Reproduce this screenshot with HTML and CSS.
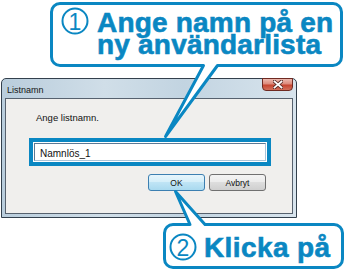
FILE: index.html
```html
<!DOCTYPE html>
<html lang="sv">
<head>
<meta charset="utf-8">
<title>Listnamn</title>
<link rel="stylesheet" href="styles.css">
</head>
<body>
<div class="page">
  <div class="callout callout-top">
    <svg class="num" width="28" height="28" viewBox="0 0 28 28"><circle cx="14" cy="14" r="12.5"/><text x="14" y="22.5">1</text></svg>
    <div class="callout-lines">
      <div class="callout-text">Ange namn på en</div>
      <div class="callout-text">ny användarlista</div>
    </div>
  </div>

  <div class="dialog">
    <div class="titlebar">
      <span class="title">Listnamn</span>
      <div class="close">
        <svg width="10" height="9" viewBox="0 0 10 9"><path class="x-out" d="M1.5 1.5 L8.5 7.5 M8.5 1.5 L1.5 7.5"/><path class="x-in" d="M1.5 1.5 L8.5 7.5 M8.5 1.5 L1.5 7.5"/></svg>
      </div>
    </div>
    <div class="content">
      <div class="prompt">Ange listnamn.</div>
      <div class="highlight"><div class="field">Namnlös_1</div></div>
      <div class="buttons">
        <div class="btn btn-ok">OK</div>
        <div class="btn">Avbryt</div>
      </div>
    </div>
  </div>

  <div class="callout callout-bottom">
    <svg class="num" width="28" height="28" viewBox="0 0 28 28"><circle cx="14" cy="14" r="12.5"/><text x="14" y="22.5">2</text></svg>
    <div class="callout-lines">
      <div class="callout-text">Klicka på</div>
    </div>
  </div>

  <svg class="tails" width="344" height="269" viewBox="0 0 344 269">
    <polygon class="tail-fill" points="165.5,136.5 203.5,65 204,63 217,63 217.5,65"/>
    <polyline class="tail-line" points="203.5,65.5 165.5,136.5 217.5,65.5"/>
    <polygon class="tail-fill" points="175.5,191.5 190,224.5 190.5,227 204.5,227 205,224.5"/>
    <polyline class="tail-line" points="190,224.5 175.5,191.5 205,224.5"/>
  </svg>
</div>
</body>
</html>
```

FILE: styles.css
```css
html, body {
  margin: 0;
  padding: 0;
}
body {
  width: 344px;
  height: 269px;
  overflow: hidden;
  background: #fff;
  font-family: "Liberation Sans", Arial, sans-serif;
  color: #111;
}
.page {
  position: relative;
  width: 344px;
  height: 269px;
  padding-top: 2px;
  box-sizing: border-box;
}

/* Callouts */
.callout {
  box-sizing: border-box;
  border: 3px solid #0a87c2;
  border-radius: 10px;
  background: #fff;
  display: flex;
  align-items: flex-start;
  color: #0a87c2;
}
.callout-top {
  margin-left: 50px;
  width: 293px;
  height: 65px;
  padding: 2px 0 0 8px;
}
.callout-bottom {
  margin: 5px 0 0 163px;
  width: 181px;
  height: 46px;
  padding: 7px 0 0 3px;
}
.callout-lines {
  margin: 5px 0 0 8px;
}
.callout-text {
  font-weight: 700;
  font-size: 28px;
  line-height: 22px;
  letter-spacing: 0.2px;
  white-space: nowrap;
  -webkit-text-stroke: 0.6px #0a87c2;
}
.callout-bottom .callout-lines {
  margin: 4px 0 0 7px;
}
.callout-bottom .callout-text {
  letter-spacing: 0.4px;
}
.num {
  flex: none;
}
.num circle {
  fill: none;
  stroke: #0a87c2;
  stroke-width: 2;
}
.num text {
  font-family: "Liberation Sans", Arial, sans-serif;
  font-size: 23px;
  fill: #0a87c2;
  text-anchor: middle;
}

/* Dialog */
.dialog {
  margin: 11px 0 0 1px;
  width: 296px;
  height: 140px;
  box-sizing: border-box;
  border: 1px solid #33404d;
  border-radius: 5px 5px 0 0;
  padding: 0 3px 3px;
  background: linear-gradient(to right, #b9cddc 0%, #d0dee8 35%, #c2d4e1 62%, #d8e4ed 100%);
  display: flex;
  flex-direction: column;
}
.titlebar {
  height: 19px;
  flex: none;
  display: flex;
  align-items: flex-start;
}
.title {
  flex: 1;
  font-size: 9px;
  line-height: 10px;
  padding: 6px 0 0 2px;
  color: #151515;
}
.close {
  width: 31px;
  height: 13px;
  margin-top: -1px;
  box-sizing: border-box;
  border: 1px solid #6e2a22;
  border-radius: 0 0 4px 4px;
  background: linear-gradient(#ecb8ae 0%, #dc8a7b 45%, #c6442f 55%, #d2705c 100%);
  display: flex;
  align-items: center;
  justify-content: center;
}
.close svg {
  display: block;
}
.x-out {
  fill: none;
  stroke: #5a2a24;
  stroke-width: 3.6;
  stroke-linecap: square;
}
.x-in {
  fill: none;
  stroke: #fff;
  stroke-width: 1.8;
  stroke-linecap: square;
}
.content {
  flex: 1;
  border: 1px solid #56616e;
  background: #f0efed;
  padding: 13px 0 0 23px;
}
.prompt {
  font-size: 9.5px;
  line-height: 12px;
  margin-left: 7px;
}
.highlight {
  margin-top: 14px;
  width: 242px;
  height: 28px;
  box-sizing: border-box;
  border: 4px solid #0a87c2;
  background: #fff;
  padding: 1px;
}
.field {
  box-sizing: border-box;
  height: 18px;
  border: 1px solid;
  border-color: #5b7995 #a9c3d8 #a9c3d8 #5b7995;
  padding: 2px 0 0 5px;
  font-size: 10px;
  line-height: 15px;
}
.buttons {
  display: flex;
  gap: 4px;
  margin: 8px 0 0 119px;
}
.btn {
  box-sizing: border-box;
  width: 57px;
  height: 17px;
  border: 1px solid #707070;
  border-radius: 3px;
  font-size: 8.5px;
  display: flex;
  align-items: center;
  justify-content: center;
  background: linear-gradient(#f3f3f3 0%, #ebebeb 50%, #dddddd 50%, #cfcfcf 100%);
}
.btn-ok {
  border-color: #3c7fb1;
  background: linear-gradient(#e6f5fc 0%, #d3eef9 50%, #bfe4f5 50%, #a9d9ef 100%);
}

/* Callout tails */
.tails {
  position: absolute;
  left: 0;
  top: 0;
  pointer-events: none;
}
.tail-fill {
  fill: #fff;
}
.tail-line {
  fill: none;
  stroke: #0a87c2;
  stroke-width: 3;
  stroke-linejoin: round;
  stroke-linecap: round;
}
```
